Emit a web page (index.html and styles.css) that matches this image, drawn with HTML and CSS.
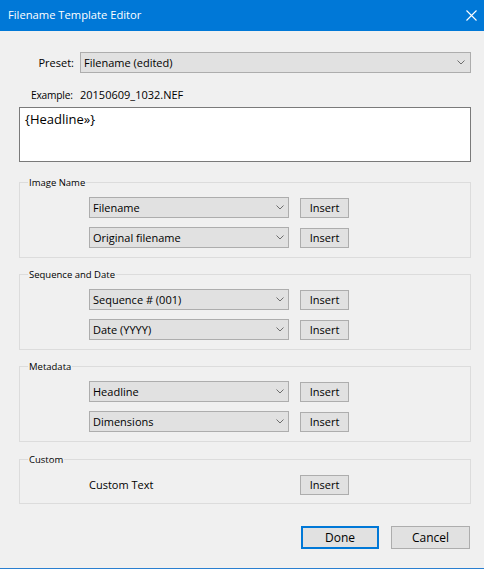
FILE: index.html
```html
<!DOCTYPE html>
<html lang="en">
<head>
<meta charset="utf-8">
<title>Filename Template Editor</title>
<link rel="stylesheet" href="styles.css">
</head>
<body>
<div class="window">
  <div class="titlebar">
    <span class="title">Filename Template Editor</span>
    <svg class="close" width="11" height="11" viewBox="0 0 11 11"><path d="M0.5 0.5 L10.5 10.5 M10.5 0.5 L0.5 10.5" stroke="#fff" stroke-width="1.1" fill="none"/></svg>
  </div>
  <div class="content">
    <div class="form-row preset-row">
      <span class="label">Preset:</span>
      <div class="combo combo-wide"><span>Filename (edited)</span><svg class="chev" width="8" height="5" viewBox="0 0 8 5"><path d="M0.5 0.5 L4 4 L7.5 0.5" stroke="#6d6d6d" fill="none"/></svg></div>
    </div>
    <div class="form-row example-row">
      <span class="label-left">Example:</span>
      <span>20150609_1032.NEF</span>
    </div>
    <div class="textbox">{Headline»}</div>

    <div class="group">
      <div class="group-title">Image Name</div>
      <div class="rows">
        <div class="row"><div class="combo"><span>Filename</span><svg class="chev" width="8" height="5" viewBox="0 0 8 5"><path d="M0.5 0.5 L4 4 L7.5 0.5" stroke="#6d6d6d" fill="none"/></svg></div><div class="btn">Insert</div></div>
        <div class="row"><div class="combo"><span>Original filename</span><svg class="chev" width="8" height="5" viewBox="0 0 8 5"><path d="M0.5 0.5 L4 4 L7.5 0.5" stroke="#6d6d6d" fill="none"/></svg></div><div class="btn">Insert</div></div>
      </div>
    </div>

    <div class="group">
      <div class="group-title">Sequence and Date</div>
      <div class="rows">
        <div class="row"><div class="combo"><span>Sequence # (001)</span><svg class="chev" width="8" height="5" viewBox="0 0 8 5"><path d="M0.5 0.5 L4 4 L7.5 0.5" stroke="#6d6d6d" fill="none"/></svg></div><div class="btn">Insert</div></div>
        <div class="row"><div class="combo"><span>Date (YYYY)</span><svg class="chev" width="8" height="5" viewBox="0 0 8 5"><path d="M0.5 0.5 L4 4 L7.5 0.5" stroke="#6d6d6d" fill="none"/></svg></div><div class="btn">Insert</div></div>
      </div>
    </div>

    <div class="group">
      <div class="group-title">Metadata</div>
      <div class="rows">
        <div class="row"><div class="combo"><span>Headline</span><svg class="chev" width="8" height="5" viewBox="0 0 8 5"><path d="M0.5 0.5 L4 4 L7.5 0.5" stroke="#6d6d6d" fill="none"/></svg></div><div class="btn">Insert</div></div>
        <div class="row"><div class="combo"><span>Dimensions</span><svg class="chev" width="8" height="5" viewBox="0 0 8 5"><path d="M0.5 0.5 L4 4 L7.5 0.5" stroke="#6d6d6d" fill="none"/></svg></div><div class="btn">Insert</div></div>
      </div>
    </div>

    <div class="group group-last">
      <div class="group-title">Custom</div>
      <div class="rows">
        <div class="row"><div class="plain-label">Custom Text</div><div class="btn">Insert</div></div>
      </div>
    </div>

    <div class="actions">
      <div class="btn btn-action btn-default">Done</div>
      <div class="btn btn-action btn-cancel">Cancel</div>
    </div>
  </div>
</div>
</body>
</html>
```

FILE: styles.css
```css
* { box-sizing: border-box; }
html, body { margin: 0; padding: 0; background: #f0f0f0; }
body {
  font-family: "Open Sans", "Noto Sans", "Liberation Sans", sans-serif;
  font-size: 11px;
  color: #000;
}
.window {
  width: 484px;
  height: 569px;
  background: #f0f0f0;
  border-bottom: 1px solid #2a7fd0;
  overflow: hidden;
}
.titlebar {
  height: 31px;
  background: #0078d7;
  color: #fff;
  display: flex;
  align-items: center;
  justify-content: space-between;
  padding: 0 7px 0 8px;
}
.title { font-size: 11.2px; line-height: 16px; padding-bottom: 1px; }
.close { display: block; margin-top: -1px; }

.content { padding: 0 13px 0 19px; }

.form-row {
  display: grid;
  grid-template-columns: 61px 1fr;
  align-items: center;
}
.preset-row { margin-top: 21px; }
.label { text-align: right; padding-right: 6px; }
.example-row { margin-top: 14px; line-height: 16px; }
.label-left { padding-left: 12px; font-size: 10.2px; letter-spacing: -0.2px; }

.combo {
  height: 21px;
  background: #e1e1e1;
  border: 1px solid #adadad;
  display: flex;
  align-items: center;
  justify-content: space-between;
  padding: 0 4px 0 3px;
  width: 200px;
}
.combo span { line-height: 16px; }
.combo-wide { width: 391px; padding-right: 5px; }
.chev { display: block; }

.textbox {
  margin-top: 4px;
  height: 55px;
  background: #fff;
  border: 1px solid #7a7a7a;
  padding: 2px 5px;
  font-size: 13px;
  line-height: 18px;
}

.group {
  margin-top: 16px;
  border: 1px solid #dcdcdc;
  padding-bottom: 9px;
}
.textbox + .group { margin-top: 20px; }
.group-last { margin-top: 17px; padding-bottom: 8px; }
.group-title {
  margin: -7px 0 0 8px;
  height: 13px;
  line-height: 13px;
  font-size: 9.5px;
  padding: 0 1px;
  background: #f0f0f0;
  width: max-content;
}
.rows {
  margin-top: 8px;
  padding-left: 69px;
  display: flex;
  flex-direction: column;
  gap: 9px;
}
.row {
  display: flex;
  align-items: center;
  gap: 11px;
  height: 21px;
}
.plain-label { width: 200px; }

.btn {
  height: 20px;
  width: 49px;
  background: #e1e1e1;
  border: 1px solid #adadad;
  display: flex;
  align-items: center;
  justify-content: center;
  line-height: 16px;
}
.actions {
  margin-top: 22px;
  display: flex;
  justify-content: flex-end;
  gap: 12px;
  padding-right: 1px;
}
.btn-action { height: 23px; width: 78px; font-size: 12px; }
.btn-cancel { width: 79px; }
.btn-default { border: 2px solid #0078d7; }
```
